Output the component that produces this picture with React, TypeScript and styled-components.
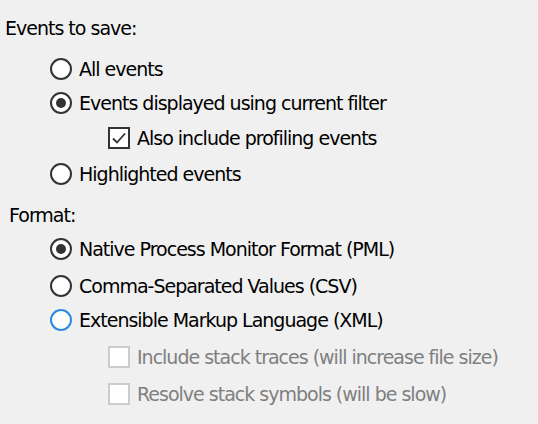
import * as React from 'react';
import styled, { createGlobalStyle } from 'styled-components';

const GlobalStyle = createGlobalStyle`
  html, body {
    margin: 0;
    padding: 0;
    background: #f0f0f0;
  }
`;

const Page = styled.div`
  width: 538px;
  height: 424px;
  box-sizing: border-box;
  padding-top: 11px;
  background: #f0f0f0;
  color: #000000;
  font-family: 'DejaVu Sans', 'Liberation Sans', sans-serif;
  font-size: 19px;
  letter-spacing: -1px;
  display: flex;
  flex-direction: column;
  overflow: hidden;
`;

const Heading = styled.div<{ $indent: number; $top?: number }>`
  height: 34px;
  display: flex;
  align-items: center;
  padding-left: ${(p) => p.$indent}px;
  margin-top: ${(p) => p.$top ?? 0}px;
  white-space: nowrap;
`;

const Row = styled.div<{ $indent: number; $top?: number; $disabled?: boolean }>`
  height: 34px;
  display: flex;
  align-items: center;
  gap: 7px;
  padding-left: ${(p) => p.$indent}px;
  margin-top: ${(p) => p.$top ?? 0}px;
  color: ${(p) => (p.$disabled ? '#7f7f7f' : '#000000')};
  white-space: nowrap;
`;

const RadioCircle = styled.span<{ $focus?: boolean }>`
  width: 22px;
  height: 22px;
  box-sizing: border-box;
  border-radius: 50%;
  border: 2px solid ${(p) => (p.$focus ? '#2b8ae0' : '#333333')};
  background: #ffffff;
  display: flex;
  align-items: center;
  justify-content: center;
  flex-shrink: 0;
`;

const RadioDot = styled.span`
  width: 10px;
  height: 10px;
  border-radius: 50%;
  background: #333333;
`;

const CheckSquare = styled.span<{ $disabled?: boolean }>`
  width: 22px;
  height: 22px;
  box-sizing: border-box;
  border: 2px solid ${(p) => (p.$disabled ? '#cccccc' : '#333333')};
  background: #ffffff;
  display: flex;
  align-items: center;
  justify-content: center;
  flex-shrink: 0;
`;

const Radio = ({ checked, focus }: { checked?: boolean; focus?: boolean }) => (
  <RadioCircle $focus={focus}>{checked && <RadioDot />}</RadioCircle>
);

const Checkbox = ({ checked, disabled }: { checked?: boolean; disabled?: boolean }) => (
  <CheckSquare $disabled={disabled}>
    {checked && (
      <svg width="16" height="16" viewBox="0 0 16 16">
        <path d="M2 8.5 L6 12.5 L14 3.5" fill="none" stroke="#333333" strokeWidth="1.8" />
      </svg>
    )}
  </CheckSquare>
);

export default function App() {
  return (
    <>
      <GlobalStyle />
      <Page>
        <Heading $indent={5}>Events to save:</Heading>
        <Row $indent={50} $top={7}>
          <Radio />
          All events
        </Row>
        <Row $indent={50}>
          <Radio checked />
          Events displayed using current filter
        </Row>
        <Row $indent={108} $top={1}>
          <Checkbox checked />
          Also include profiling events
        </Row>
        <Row $indent={50} $top={2}>
          <Radio />
          Highlighted events
        </Row>
        <Heading $indent={9} $top={7}>Format:</Heading>
        <Row $indent={50}>
          <Radio checked />
          Native Process Monitor Format (PML)
        </Row>
        <Row $indent={50} $top={3}>
          <Radio />
          Comma-Separated Values (CSV)
        </Row>
        <Row $indent={50}>
          <Radio focus />
          Extensible Markup Language (XML)
        </Row>
        <Row $indent={108} $top={3} $disabled>
          <Checkbox disabled />
          Include stack traces (will increase file size)
        </Row>
        <Row $indent={108} $top={3} $disabled>
          <Checkbox disabled />
          Resolve stack symbols (will be slow)
        </Row>
      </Page>
    </>
  );
}
